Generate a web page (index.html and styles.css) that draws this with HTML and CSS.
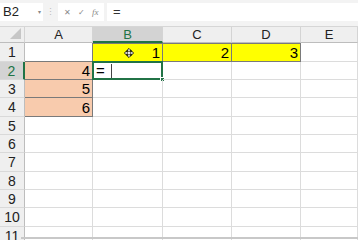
FILE: index.html
```html
<!DOCTYPE html>
<html>

<head>
    <title>Sheet</title>
    <link rel="stylesheet" href="styles.css">
</head>

<body>
    <div class="toolbar">
        <div class="name-box">B2<span class="drop">&#9662;</span></div>
        <div class="grip">&#8942;</div>
        <div class="fn-box">
            <span>&#10005;</span>
            <span>&#10003;</span>
            <span class="fx">fx</span>
        </div>
        <div class="formula">=</div>
    </div>

    <div class="sheet">
        <div class="corner"><span class="tri"></span></div>
        <div class="col-head">A</div>
        <div class="col-head active">B</div>
        <div class="col-head">C</div>
        <div class="col-head">D</div>
        <div class="col-head">E</div>

        <div class="row-head">1</div>
        <div class="cell edge-right edge-bottom"></div>
        <div class="cell yellow">
            <svg class="move" width="10" height="10" viewBox="0 0 11 11">
                <path d="M5.5 0.5 L8 3 H6.5 V4.5 H8 V3 L10.5 5.5 L8 8 V6.5 H6.5 V8 H8 L5.5 10.5 L3 8 H4.5 V6.5 H3 V8 L0.5 5.5 L3 3 V4.5 H4.5 V3 H3 Z" fill="#fff" stroke="#000" stroke-width="1"/>
            </svg>
            1
        </div>
        <div class="cell yellow">2</div>
        <div class="cell yellow">3</div>
        <div class="cell"></div>

        <div class="row-head active">2</div>
        <div class="cell salmon">4</div>
        <div class="cell selected">=<span class="caret"></span><span class="handle"></span></div>
        <div class="cell"></div>
        <div class="cell"></div>
        <div class="cell"></div>

        <div class="row-head">3</div>
        <div class="cell salmon">5</div>
        <div class="cell"></div>
        <div class="cell"></div>
        <div class="cell"></div>
        <div class="cell"></div>

        <div class="row-head">4</div>
        <div class="cell salmon">6</div>
        <div class="cell"></div>
        <div class="cell"></div>
        <div class="cell"></div>
        <div class="cell"></div>

        <div class="row-head">5</div>
        <div class="cell"></div><div class="cell"></div><div class="cell"></div><div class="cell"></div><div class="cell"></div>
        <div class="row-head">6</div>
        <div class="cell"></div><div class="cell"></div><div class="cell"></div><div class="cell"></div><div class="cell"></div>
        <div class="row-head">7</div>
        <div class="cell"></div><div class="cell"></div><div class="cell"></div><div class="cell"></div><div class="cell"></div>
        <div class="row-head">8</div>
        <div class="cell"></div><div class="cell"></div><div class="cell"></div><div class="cell"></div><div class="cell"></div>
        <div class="row-head">9</div>
        <div class="cell"></div><div class="cell"></div><div class="cell"></div><div class="cell"></div><div class="cell"></div>
        <div class="row-head">10</div>
        <div class="cell"></div><div class="cell"></div><div class="cell"></div><div class="cell"></div><div class="cell"></div>
        <div class="row-head">11</div>
        <div class="cell"></div><div class="cell"></div><div class="cell"></div><div class="cell"></div><div class="cell"></div>
    </div>
    <div class="bottom-line"></div>
</body>

</html>
```

FILE: styles.css
```css
* {
    box-sizing: border-box;
}

body {
    margin: 0;
    width: 358px;
    height: 240px;
    overflow: hidden;
    font-family: "Liberation Sans", Arial, sans-serif;
    background: #fff;
    position: relative;
}

.toolbar {
    height: 27px;
    background: #f3f3f3;
    border-bottom: 1px solid #d6d6d6;
    display: flex;
    align-items: flex-start;
    padding-top: 3px;
}

.name-box {
    width: 43px;
    height: 18px;
    background: #fff;
    font-size: 13px;
    line-height: 18px;
    padding-left: 3px;
    color: #222;
    position: relative;
}

.name-box .drop {
    position: absolute;
    right: 2px;
    top: 0;
    font-size: 6px;
    color: #888;
}

.grip {
    width: 15px;
    text-align: center;
    font-size: 9px;
    line-height: 18px;
    color: #bbb;
}

.fn-box {
    width: 46px;
    height: 18px;
    background: #fff;
    display: flex;
    justify-content: space-around;
    align-items: center;
    padding: 0 2px;
    font-size: 8px;
    color: #888;
}

.fn-box .fx {
    font-style: italic;
    font-family: "Liberation Serif", serif;
    font-size: 9px;
}

.formula {
    flex: 1;
    height: 18px;
    margin-left: 3px;
    background: #fff;
    font-size: 13px;
    line-height: 18px;
    padding-left: 6px;
    color: #333;
}

.sheet {
    display: grid;
    grid-template-columns: 25px 68px 70px 69px 69px 57px;
    grid-template-rows: 16px 19px 18px 18px 19px 18px 18px 19px 18px 18px 19px 18px;
}

.corner,
.col-head,
.row-head {
    background: #efefef;
    border-right: 1px solid #d4d4d4;
    border-bottom: 1px solid #bdbdbd;
    color: #222;
}

.corner {
    position: relative;
}

.corner .tri {
    position: absolute;
    right: 3px;
    bottom: 3px;
    width: 0;
    height: 0;
    border-left: 11px solid transparent;
    border-bottom: 11px solid #c6c6c6;
}

.col-head {
    font-size: 13px;
    line-height: 15px;
    text-align: center;
}

.row-head {
    font-size: 14px;
    text-align: center;
    display: flex;
    align-items: center;
    justify-content: center;
    border-bottom: 1px solid #d9d9d9;
    border-right: 1px solid #bdbdbd;
}

.col-head.active {
    background: #d3d3d3;
    color: #217346;
    border-bottom: 2px solid #217346;
}

.row-head.active {
    background: #d3d3d3;
    color: #217346;
    border-right: 2px solid #217346;
}

.cell {
    border-right: 1px solid #dcdcdc;
    border-bottom: 1px solid #dcdcdc;
    font-size: 15px;
    text-align: right;
    padding-right: 2px;
    display: flex;
    align-items: center;
    justify-content: flex-end;
    position: relative;
}

.edge-right {
    border-right-color: #7a7a7a;
}

.edge-bottom {
    border-bottom-color: #7a7a7a;
}

.yellow {
    background: #ffff00;
    border-right: 1px solid #7a7a7a;
    border-bottom: 1px solid #7a7a7a;
    box-shadow: inset 0 1px 0 #7a7a7a;
}

.salmon {
    background: #f8cbad;
    border-right: 1px solid #7a7a7a;
    border-bottom: 1px solid #7a7a7a;
}

.move {
    position: absolute;
    left: 31px;
    top: 5px;
}

.selected {
    justify-content: flex-start;
    padding-left: 2px;
    border: 2px solid #217346;
    margin: -1px 0 0 -1px;
}

.caret {
    display: inline-block;
    width: 1px;
    height: 14px;
    background: #444;
    margin-left: 6px;
}

.handle {
    position: absolute;
    right: -4px;
    bottom: -4px;
    width: 5px;
    height: 5px;
    background: #217346;
    border: 1px solid #fff;
}

.bottom-line {
    position: absolute;
    left: 21px;
    right: 0;
    bottom: 1px;
    height: 2px;
    background: #c8c8c8;
}
```
